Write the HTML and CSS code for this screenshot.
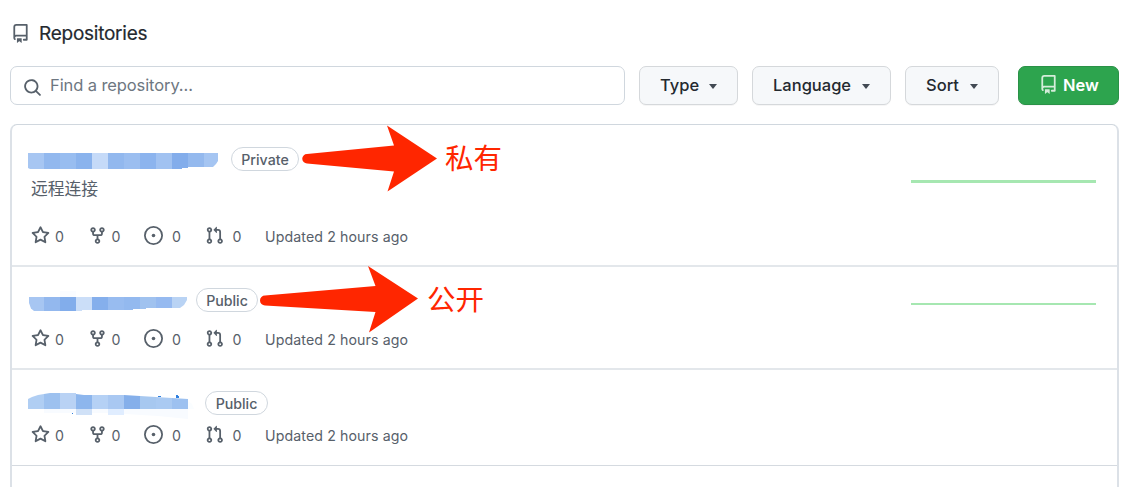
FILE: index.html
```html
<!DOCTYPE html>
<html lang="en">
<head>
<meta charset="utf-8">
<title>Repositories</title>
<link rel="stylesheet" href="styles.css">
</head>
<body>
<svg class="defs" aria-hidden="true">
  <symbol id="repo" viewBox="0 0 16 16"><path fill-rule="evenodd" d="M2 2.5A2.5 2.5 0 014.5 0h8.75a.75.75 0 01.75.75v12.5a.75.75 0 01-.75.75h-2.5a.75.75 0 110-1.5h1.75v-2h-8a1 1 0 00-.714 1.7.75.75 0 01-1.072 1.05A2.495 2.495 0 012 11.5v-9zm10.5-1V9h-8c-.356 0-.694.074-1 .208V2.5a1 1 0 011-1h8zM5 12.25v3.25a.25.25 0 00.4.2l1.45-1.087a.25.25 0 01.3 0L8.6 15.7a.25.25 0 00.4-.2v-3.25a.25.25 0 00-.25-.25h-3.5a.25.25 0 00-.25.25z"/></symbol>
  <symbol id="search" viewBox="0 0 16 16"><path fill-rule="evenodd" d="M11.5 7a4.499 4.499 0 11-8.998 0A4.499 4.499 0 0111.5 7zm-.82 4.74a6 6 0 111.06-1.06l3.04 3.04a.75.75 0 11-1.06 1.06l-3.04-3.04z"/></symbol>
  <symbol id="star" viewBox="0 0 16 16"><path fill-rule="evenodd" d="M8 .25a.75.75 0 01.673.418l1.882 3.815 4.21.612a.75.75 0 01.416 1.279l-3.046 2.97.719 4.192a.75.75 0 01-1.088.791L8 12.347l-3.766 1.98a.75.75 0 01-1.088-.79l.72-4.194L.818 6.374a.75.75 0 01.416-1.28l4.21-.611L7.327.668A.75.75 0 018 .25zm0 2.445L6.615 5.5a.75.75 0 01-.564.41l-3.097.45 2.24 2.184a.75.75 0 01.216.664l-.528 3.084 2.769-1.456a.75.75 0 01.698 0l2.77 1.456-.53-3.084a.75.75 0 01.216-.664l2.24-2.183-3.096-.45a.75.75 0 01-.564-.41L8 2.694z"/></symbol>
  <symbol id="fork" viewBox="0 0 16 16"><path fill-rule="evenodd" d="M5 3.25a.75.75 0 11-1.5 0 .75.75 0 011.5 0zm0 2.122a2.25 2.25 0 10-1.5 0v.878A2.25 2.25 0 005.75 8.5h1.5v2.128a2.251 2.251 0 101.5 0V8.5h1.5a2.25 2.25 0 002.25-2.25v-.878a2.25 2.25 0 10-1.5 0v.878a.75.75 0 01-.75.75h-4.5A.75.75 0 015 6.25v-.878zm3.75 7.378a.75.75 0 11-1.5 0 .75.75 0 011.5 0zm3-8.75a.75.75 0 100-1.5.75.75 0 000 1.5z"/></symbol>
  <symbol id="issue" viewBox="0 0 16 16"><path d="M8 9.5a1.5 1.5 0 100-3 1.5 1.5 0 000 3z"/><path fill-rule="evenodd" d="M8 0a8 8 0 100 16A8 8 0 008 0zM1.5 8a6.5 6.5 0 1113 0 6.5 6.5 0 01-13 0z"/></symbol>
  <symbol id="pull" viewBox="0 0 16 16"><path fill-rule="evenodd" d="M7.177 3.073L9.573.677A.25.25 0 0110 .854v4.792a.25.25 0 01-.427.177L7.177 3.427a.25.25 0 010-.354zM3.75 2.5a.75.75 0 100 1.5.75.75 0 000-1.5zm-2.25.75a2.25 2.25 0 113 2.122v5.256a2.251 2.251 0 11-1.5 0V5.372A2.25 2.25 0 011.5 3.25zM11 2.5h-1V4h1a1 1 0 011 1v5.628a2.251 2.251 0 101.5 0V5A2.5 2.5 0 0011 2.5zm1 10.25a.75.75 0 111.5 0 .75.75 0 01-1.5 0zM3.75 12a.75.75 0 100 1.5.75.75 0 000-1.5z"/></symbol>
</svg>

<header class="heading"><svg class="icon"><use href="#repo"/></svg><h1>Repositories</h1></header>

<div class="toolbar">
  <div class="search"><svg class="icon"><use href="#search"/></svg><span>Find a repository...</span></div>
  <button class="btn type"><span>Type</span><i class="caret"></i></button>
  <button class="btn language"><span>Language</span><i class="caret"></i></button>
  <button class="btn sort"><span>Sort</span><i class="caret"></i></button>
  <button class="btn new"><svg class="icon"><use href="#repo"/></svg><span>New</span></button>
</div>

<main class="list">
  <article class="row first">
    <div class="info">
      <div class="title">
        <svg class="mosaic" width="190" height="20" viewBox="0 0 190 20">
          <path fill="#a7c6f2" d="M0 3H16V19H2L0 18Z"/><path fill="#92b8ee" d="M16 3h16v16H16z"/><path fill="#98bdf0" d="M32 3h16v16H32z"/><path fill="#8ab3ed" d="M48 3h16v16H48z"/><path fill="#c5daf8" d="M64 3h16v16H64z"/><path fill="#92b8ee" d="M80 3h16v16H80z"/><path fill="#9bbef0" d="M96 3h16v16H96z"/><path fill="#8cb4ee" d="M112 3h16v16h-16z"/><path fill="#a1c2f1" d="M128 3h16v16h-16z"/><path fill="#83adeb" d="M144 3h16v15h-6v1h-10z"/><path fill="#94b9ee" d="M160 3h16v14h-16z"/><path fill="#a5c5f2" d="M176 3h14v8l-2 3-3 3h-9z"/>
        </svg>
        <span class="badge private">Private</span>
      </div>
      <p class="desc">远程连接</p>
      <div class="stats"><span><svg class="icon"><use href="#star"/></svg>0</span><span><svg class="icon"><use href="#fork"/></svg>0</span><span class="wide"><svg class="icon"><use href="#issue"/></svg>0</span><span class="wide"><svg class="icon"><use href="#pull"/></svg>0</span><time>Updated 2 hours ago</time></div>
    </div>
    <div class="graph"></div>
    <div class="note note-private"><svg viewBox="0 0 136 67"><path d="M5 29L92 20.500L85 .5L135 33.500L85.500 66.500L92 46.500L5 38.500A4.750 4.750 0 0 1 5 29Z"/></svg><span>私有</span></div>
  </article>
  <article class="row second">
    <div class="info">
      <div class="title">
        <svg class="mosaic" width="160" height="20" viewBox="0 0 160 20">
          <path fill="#fafcff" d="M32-2h16v6H32z"/><path fill="#a7c6f2" d="M1 4H16V18H6L3 15.500L1 10Z"/><path fill="#93b8ee" d="M16 4h16v14H16z"/><path fill="#82adeb" d="M32 4h16v14H32z"/><path fill="#cbdef8" d="M48 4h16v13H54v1h-6z"/><path fill="#85afec" d="M64 4h16v13H64z"/><path fill="#98bcf0" d="M80 4h16v13H80z"/><path fill="#93b9ef" d="M96 4h16v12h-7v1h-9z"/><path fill="#a0c2ef" d="M112 4h16v11h-10v1h-6z"/><path fill="#96baf0" d="M128 4h16v11h-16z"/><path fill="#b9d3f4" d="M144 4h15v3l-3 5-4 3h-8z"/>
        </svg>
        <span class="badge public">Public</span>
      </div>
      <div class="stats"><span><svg class="icon"><use href="#star"/></svg>0</span><span><svg class="icon"><use href="#fork"/></svg>0</span><span class="wide"><svg class="icon"><use href="#issue"/></svg>0</span><span class="wide"><svg class="icon"><use href="#pull"/></svg>0</span><time>Updated 2 hours ago</time></div>
    </div>
    <div class="graph"></div>
    <div class="note note-public"><svg viewBox="0 0 159 67"><path d="M5 29.500L115.500 20L108 0L158 32.500L109 66.500L115.500 46L5 39.500A5 5 0 0 1 5 29.500Z"/></svg><span>公开</span></div>
  </article>
  <article class="row third">
    <div class="info">
      <div class="title">
        <svg class="mosaic" width="166" height="26" viewBox="0 0 166 26">
          <path fill="#f8fbff" d="M16 16h144v10l-30-3-50-3H16z"/><path fill="#fafdff" d="M160 8l4 3 2 5h-6z"/>
          <path fill="#b0cef3" d="M0 6L4 4L10 2L16 1V16H0Z"/><path fill="#9dc1ef" d="M16 1L22 0H32V16H16Z"/><path fill="#b9d2f4" d="M32 0h16v16H32z"/><path fill="#8db6ed" d="M48 1l8 1h8v14H48z"/><path fill="#b5d1f5" d="M64 2h16v14H64z"/><path fill="#a9c8f2" d="M80 2h16v14H80z"/><path fill="#85afea" d="M96 2l16 1v13H96z"/><path fill="#a7c8f0" d="M112 3l16 1v12h-16z"/><path fill="#aacaf2" d="M128 4l16 1v11h-16z"/><path fill="#9dc1f0" d="M144 5l16 1v10h-16z"/>
          <path fill="#d0e1f7" d="M48 16h16v6H48z"/><path fill="#e0edff" d="M80 16h16v6H80z"/><path fill="#2f7fdf" d="M130 3h3v1h-3zM148 2h2v1h1v2h-3zM44 20h1v1h-1z"/>
        </svg>
        <span class="badge public">Public</span>
      </div>
      <div class="stats"><span><svg class="icon"><use href="#star"/></svg>0</span><span><svg class="icon"><use href="#fork"/></svg>0</span><span class="wide"><svg class="icon"><use href="#issue"/></svg>0</span><span class="wide"><svg class="icon"><use href="#pull"/></svg>0</span><time>Updated 2 hours ago</time></div>
    </div>
  </article>
</main>
</body>
</html>
```

FILE: styles.css
```css
* { box-sizing: border-box; }
body {
  margin: 0;
  height: 487px;
  overflow: hidden;
  background: #fff;
  color: #24292f;
  font-family: Inter, "Noto Sans CJK SC", sans-serif;
  display: flex;
  flex-direction: column;
}
.defs { display: none; }
.icon { display: block; width: 19px; height: 19px; flex: none; fill: #57606a; }

.heading { height: 66px; padding: 1px 0 0 11px; display: flex; align-items: center; gap: 9px; }
.heading h1 { margin: 0; font-size: 19px; line-height: 24px; font-weight: 400; letter-spacing: -0.25px; -webkit-text-stroke: 0.2px #24292f; }

.toolbar { display: flex; height: 39px; margin: 0 6px 19px 10px; }
.search {
  width: 615px;
  border: 1px solid #d0d7de;
  border-radius: 7px;
  padding-left: 12px;
  display: flex;
  align-items: center;
  gap: 8px;
  color: #6e7781;
  font-size: 16.500px;
  letter-spacing: -0.1px;
}
.search span { margin-top: -1px; }
.search .icon { margin-top: 4px; }
.btn {
  border: 1px solid #d5d8db;
  border-radius: 7px;
  background: #f6f8fa;
  box-shadow: 0 1px 0 rgba(27, 31, 36, 0.04);
  color: #24292f;
  font: 500 16.500px/24px Inter, sans-serif;
  padding: 0 0 1px 20px;
  display: flex;
  align-items: center;
  gap: 10px;
}
.type { width: 99px; margin-left: 14px; }
.language { width: 139px; margin-left: 14px; }
.sort { width: 94px; margin-left: 14px; }
.caret { border: 4.500px solid transparent; border-top: 5px solid #424a53; border-bottom: 0; margin-top: 3px; }
.language .caret { margin-left: 1px; }
.sort .caret { margin-left: 1px; }
.new { width: 101px; margin-left: 19px; padding-left: 20px; gap: 5px; background: #2da44e; border-color: #2a9147; color: #fff; font-weight: 600; }
.new .icon { fill: #d5edda; margin-top: -1px; }

.list {
  flex: 1;
  margin: 0 6px -10px 10px;
  border: 1px solid #d0d7de;
  border-left: 2px solid #dce1e7;
  border-right: 2px solid #dce1e7;
  border-radius: 7px 7px 0 0;
}
.row { position: relative; display: flex; justify-content: space-between; border-bottom: 2px solid #e3e7eb; padding-left: 16px; }
.first { height: 142px; padding-top: 22px; }
.second { height: 103px; padding-top: 21px; }
.third { height: 96px; padding-top: 21px; border-bottom: 1px solid #d5dae0; }
.title { display: flex; height: 26px; align-items: flex-start; }
.mosaic { display: block; flex: none; overflow: visible; }
.first .mosaic { margin-top: 3px; }
.second .mosaic { margin-top: 5px; }
.third .mosaic { margin-top: 2px; }
.badge {
  height: 24px;
  border: 1px solid #d0d7de;
  border-radius: 12px;
  color: #57606a;
  font-size: 14.200px;
  line-height: 23px;
  font-weight: 500;
  text-align: center;
}
.private { width: 68px; margin-left: 13px; }
.public { width: 62px; margin-left: 8px; }
.third .badge { margin-left: 11px; width: 63px; }
.desc { margin: 4px 0 0 3px; height: 24px; font-size: 16.800px; line-height: 24px; color: #57606a; }
.stats { display: flex; margin-left: 3px; color: #57606a; font-size: 14.200px; line-height: 20px; }
.stats span { display: flex; gap: 5px; width: 56.500px; align-items: center; }
.stats .icon { margin-top: -3px; }
.stats .wide { gap: 9px; width: 60.500px; }
.stats time { letter-spacing: 0.1px; }
.first .stats { margin-top: 26px; }
.second .stats { margin-top: 16px; }
.third .stats { margin-top: 9px; }
.graph { width: 185px; height: 2px; background: #a6e7b1; margin-right: 21px; }
.first .graph { margin-top: 33px; height: 3px; }
.second .graph { margin-top: 15px; }

/* Red call-outs drawn over the rows */
.note { position: absolute; display: flex; align-items: center; color: #ff2600; font-size: 28.500px; line-height: 34px; }
.note svg { width: 136px; height: 67px; fill: #ff2600; }
.note-private { left: 290px; top: 0; gap: 7px; }
.note-public { left: 248px; top: -1px; gap: 8px; }
.note-public svg { width: 159px; }
```
